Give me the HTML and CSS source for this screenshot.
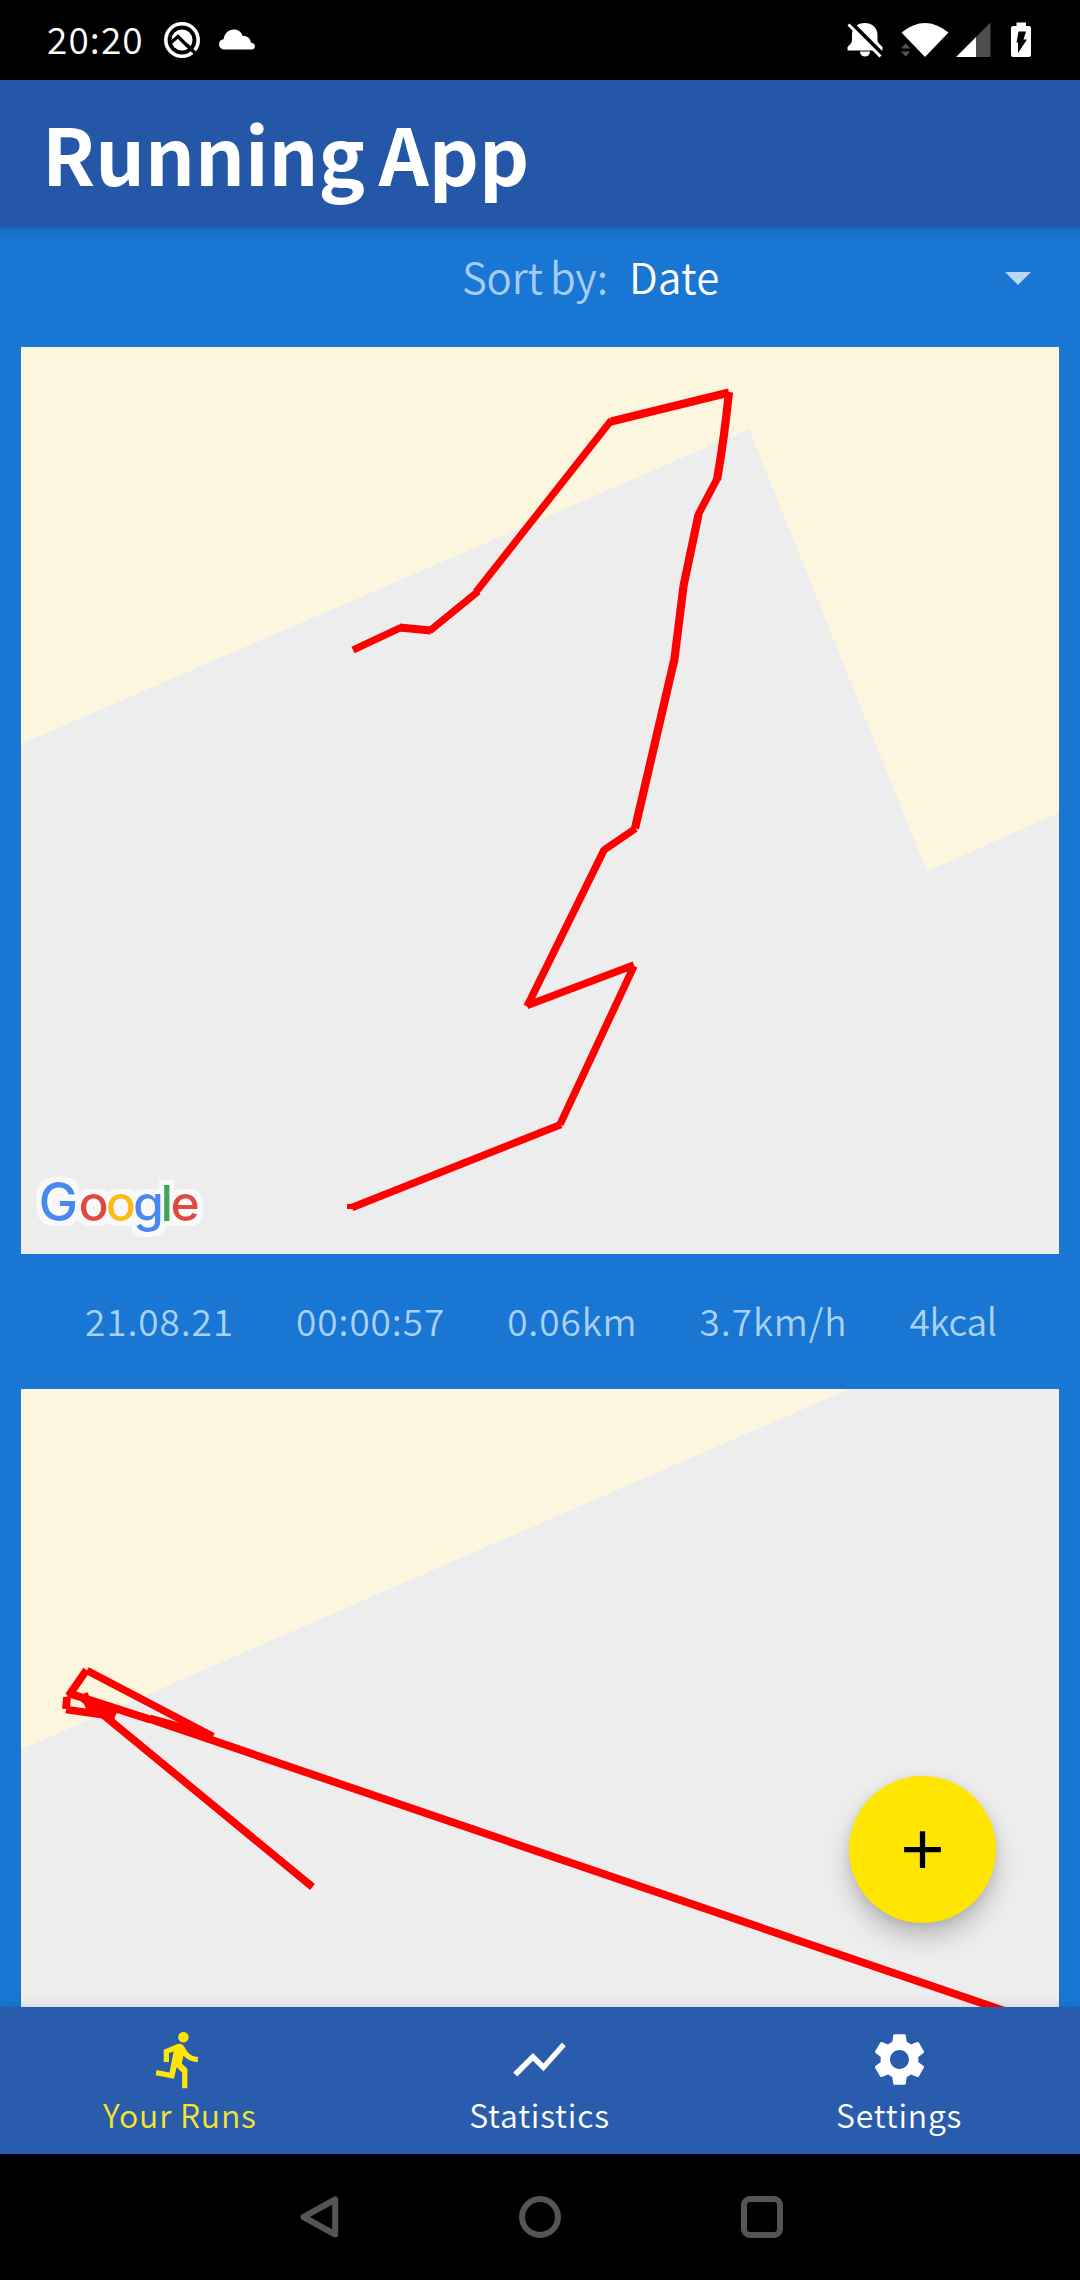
FILE: index.html
```html
<!DOCTYPE html>
<html lang="en">
<head>
<meta charset="utf-8">
<title>Running App</title>
<link rel="stylesheet" href="styles.css">
</head>
<body>
<div class="screen">
  <div class="status-bar">
    <span class="clock">20:20</span>
    <svg class="icon-q" width="38" height="38" viewBox="0 0 38 38">
      <circle cx="19" cy="19" r="16.2" fill="none" stroke="#fff" stroke-width="3.600"/>
      <circle cx="19" cy="19" r="10.5" fill="#fff"/>
      <path d="M8 21.500l7-6 10 10" fill="none" stroke="#000" stroke-width="3.400"/>
      <path d="M24 24l9 9" fill="none" stroke="#000" stroke-width="3.400"/>
    </svg>
    <svg class="icon-cloud" width="36" height="21" viewBox="0 0 36 21">
      <path d="M6 20.500C2.500 20.500 0 18.300 0 15.200C0 12.400 2 10.500 4.600 10.200C5.200 4.500 9.500.5 14.800.5C19.300.5 22.500 3.200 23.800 7C28.500 6.800 31.500 9.600 31.800 13.400C34.300 13.600 36 15.100 36 17.200C36 19.200 34.400 20.500 32.300 20.500Z" fill="#fff"/>
    </svg>
    <span class="spacer"></span>
    <svg width="36" height="36" viewBox="0 0 36 36" class="icon-bell">
      <path d="M12.500 33.500L13 29.500H23V30C22.500 33 20.500 34.500 18 34.500C15.500 34.500 13.500 33 13 30Z" fill="#fff"/>
      <path d="M0.500 28.500V25C3 22.500 5 21 5 18V13C5 5.500 10.500 1 18 1C25.500 1 30.500 6 30.500 13V18C30.500 21 32.500 22 35.500 25V28.500Z" fill="#fff"/>
      <path d="M3.500 0L36 32.500" stroke="#000" stroke-width="4"/>
      <path d="M1.500 2.500L33.500 34.500" stroke="#fff" stroke-width="3"/>
    </svg>
    <svg width="48" height="36" viewBox="0 0 48 36" class="icon-wifi">
      <path d="M0.500 10.500Q24-8.500 47.500 10.500L24 35Z" fill="#fff"/>
      <path d="M0 26.500L4.700 21.500L9.400 26.500ZM0 29.500H9.400L4.700 34.500Z" fill="#555"/>
    </svg>
    <svg width="36" height="36" viewBox="0 0 36 36" class="icon-signal">
      <path d="M20 15L34.500 0.500V33.500Q34.500 35 33 35H20Z" fill="#4d4d4d"/>
      <path d="M20 15V35H1Q0 35 0.500 34.500Z" fill="#fff"/>
    </svg>
    <svg width="20" height="36" viewBox="0 0 20 36" class="icon-battery">
      <path d="M5.500 0.500H15V4H18Q20 4 20 6V33Q20 35 18 35H2Q0 35 0 33V6Q0 4 2 4H5.500Z" fill="#fff"/>
      <path d="M7.500 9.500H15L12.500 17.500H16L7 31V20.500H5.500Z" fill="#000"/>
    </svg>
  </div>

  <header class="app-bar"><h1>Running App</h1></header>

  <main class="content">
    <div class="sort-row">
      <span class="sort-label">Sort by:</span>
      <span class="sort-value">Date</span>
      <svg width="26" height="13" viewBox="0 0 26 13"><path d="M0 0H26L13 13Z" fill="#bbd6f2"/></svg>
    </div>

    <article class="run">
      <svg class="map" width="1038" height="907" viewBox="21 347 1038 907">
        <filter id="halo" x="-10%" y="-20%" width="120%" height="140%">
          <feMorphology in="SourceAlpha" operator="dilate" radius="4.5" result="wide"/>
          <feGaussianBlur in="wide" stdDeviation="0.7" result="soft"/>
          <feFlood flood-color="#f9f9f9"/>
          <feComposite in2="soft" operator="in"/>
          <feMerge><feMergeNode/><feMergeNode in="SourceGraphic"/></feMerge>
        </filter>
        <rect x="21" y="347" width="1038" height="907" fill="#ededed"/>
        <path d="M21 347H1059V812.500L927 871.500L749 429L21 744Z" fill="#fdf6df"/>
        <g class="track">
          <path stroke-width="7.400" d="M353 650L401 627.500M429.500 631L478 591.500M604 850L635.500 828.500M604.500 849L527 1006.500M634 966L560 1124.500M527 1005.500L634 965M561 1124.500L352 1207.500M717 479L698 515"/>
          <path stroke-width="7.200" d="M476 592L611.500 420"/>
          <path stroke-width="8.200" d="M399.500 627.500L431 630.500M611 421.500L729 392.500M729 392Q724 440 717 480M698.500 514.500L683.500 586M683.500 586L674 662.500M674 661L635 828.500"/>
          <path stroke-width="5" d="M347 1206.500H353"/>
        </g>
        <text class="logo" y="1220.500" filter="url(#halo)"><tspan class="logo-cap" x="38.500" fill="#4688f1">G</tspan><tspan x="78.500" fill="#e04a3f">o</tspan><tspan x="105.800" fill="#fabc0e">o</tspan><tspan x="133" fill="#4688f1">g</tspan><tspan x="160.500" fill="#3fa457">l</tspan><tspan x="170.500" fill="#e04a3f">e</tspan></text>
      </svg>
      <div class="stats">
        <span>21.08.21</span><span>00:00:57</span><span>0.06km</span><span>3.7km/h</span><span>4kcal</span>
      </div>
    </article>

    <article class="run">
      <svg class="map" width="1038" height="618" viewBox="21 1389 1038 618">
        <rect x="21" y="1389" width="1038" height="618" fill="#ededed"/>
        <path d="M21 1389H849L21 1749.500Z" fill="#fdf6df"/>
        <g class="track">
          <path stroke-width="7.600" d="M87 1670.500L213 1736.500M86.500 1670L68.500 1696M84 1699L312.500 1887M84 1693.500L90 1709"/>
          <path stroke-width="7.800" d="M67 1697L66 1709M66 1709.500L115 1716.500M68 1693L150 1719.500M150 1718.500L212 1736M150 1719L1005 2011M82 1697.500L115 1716.500"/>
        </g>
      </svg>
    </article>

    <button class="fab" aria-label="Add run">
      <svg width="63" height="63" viewBox="0 0 24 24"><path d="M19 13h-6v6h-2v-6H5v-2h6V5h2v6h6z"/></svg>
    </button>
  </main>

  <nav class="tabs">
    <a class="tab active">
      <svg width="63" height="63" viewBox="0 0 24 24"><path d="M13.490 5.480c1.100 0 2-.9 2-2s-.9-2-2-2-2 .9-2 2 .9 2 2 2zm-3.600 13.900l1-4.400 2.100 2v6h2v-7.500l-2.100-2 .6-3c1.300 1.500 3.300 2.500 5.500 2.500v-2c-1.900 0-3.500-1-4.300-2.400l-1-1.600c-.4-.6-1-1-1.700-1-.3 0-.5.1-.8.1l-5.200 2.200v4.700h2v-3.400l1.800-.7-1.600 8.100-4.900-1-.4 2 7 1.400z"/></svg>
      <span>Your Runs</span>
    </a>
    <a class="tab">
      <svg width="63" height="63" viewBox="0 0 24 24"><path d="M3.500 18.490l6-6.010 4 4L22 6.920l-1.410-1.410-7.090 7.970-4-4L2 16.990z"/></svg>
      <span>Statistics</span>
    </a>
    <a class="tab">
      <svg width="63" height="63" viewBox="0 0 24 24"><path d="M19.140 12.940c.04-.3.060-.61.060-.94 0-.32-.02-.64-.07-.94l2.030-1.580c.18-.14.230-.41.120-.61l-1.920-3.320c-.12-.22-.37-.29-.59-.22l-2.390.96c-.5-.38-1.030-.7-1.620-.94l-.36-2.540c-.04-.24-.24-.41-.48-.41h-3.840c-.24 0-.43.170-.47.410l-.36 2.540c-.59.240-1.130.570-1.620.940l-2.390-.96c-.22-.08-.47 0-.59.220L2.740 8.870c-.12.210-.08.470.12.610l2.030 1.580c-.05.300-.09.630-.09.940s.02.640.07.940l-2.030 1.580c-.18.140-.23.410-.12.610l1.920 3.320c.12.220.370.290.590.220l2.390-.96c.5.380 1.030.700 1.620.940l.36 2.540c.05.240.240.410.480.410h3.840c.24 0 .440-.170.470-.410l.36-2.540c.59-.24 1.130-.56 1.620-.94l2.390.96c.22.080.470 0 .590-.22l1.920-3.320c.12-.22.070-.47-.12-.61l-2.010-1.580zM12 15.600c-1.980 0-3.600-1.620-3.600-3.600s1.620-3.600 3.600-3.600 3.600 1.620 3.600 3.600-1.620 3.600-3.600 3.600z"/></svg>
      <span>Settings</span>
    </a>
  </nav>

  <div class="system-nav">
    <svg width="42" height="44" viewBox="0 0 42 44"><path d="M36.200 4.500V39.500L4.500 22Z"/></svg>
    <svg width="44" height="44" viewBox="0 0 44 44"><circle cx="22" cy="22" r="18"/></svg>
    <svg width="44" height="44" viewBox="0 0 44 44"><rect x="4" y="4" width="36" height="36" rx="6"/></svg>
  </div>
</div>
</body>
</html>
```
FILE: styles.css
```css
* { box-sizing: border-box; }

body {
  margin: 0;
  background: #000;
  font-family: "Noto Sans CJK SC", "Noto Sans", sans-serif;
  font-weight: 350;
  color: #fff;
}

svg { display: block; flex: none; }

.screen {
  width: 1080px;
  height: 2280px;
  display: flex;
  flex-direction: column;
  overflow: hidden;
}

.status-bar {
  height: 80px;
  flex: none;
  display: flex;
  align-items: center;
  padding: 0 49px 0 46px;
  background: #000;
}

.clock {
  font-size: 37px;
  line-height: 44px;
  padding-bottom: 4px;
  padding-left: 1px;
  letter-spacing: 1.1px;
  width: 117px;
}

.icon-cloud { margin-left: 18px; margin-top: -2px; }
.spacer { flex: 1; }
.icon-wifi { margin-left: 18px; }
.icon-signal { margin-left: 7px; }
.icon-battery { margin-left: 19px; }

.app-bar {
  height: 147px;
  flex: none;
  display: flex;
  align-items: center;
  padding: 0 42px 4px;
  background: #2457a7;
  box-shadow: 0 3px 8px rgba(0, 0, 0, .18);
  position: relative;
  z-index: 1;
}

.app-bar h1 {
  margin: 0;
  font-size: 78px;
  line-height: 90px;
  font-weight: 700;
  word-spacing: -4px;
  white-space: nowrap;
}

.content {
  height: 1780px;
  flex: none;
  position: relative;
  padding: 0 21px;
  background: #1976d2;
  overflow: hidden;
}

.sort-row {
  height: 120px;
  display: flex;
  align-items: center;
  padding: 0 28px 18px 441px;
  font-size: 42px;
  line-height: 50px;
}

.sort-row span { padding-bottom: 5px; }
.sort-label { width: 167px; color: #a3cdf6; white-space: nowrap; letter-spacing: -.2px; word-spacing: -2px; }
.sort-value { flex: 1; letter-spacing: .3px; }

.track {
  fill: none;
  stroke: #f00;
}

.logo {
  font-family: Inter, sans-serif;
  font-size: 50px;
  font-weight: 500;
}

.logo-cap { font-size: 53px; }

.stats {
  height: 135px;
  display: flex;
  align-items: center;
  justify-content: space-evenly;
  padding: 0 0 3px 2px;
  font-size: 37px;
  line-height: 44px;
  letter-spacing: .9px;
  color: #a9d1f8;
}

.stats span:last-child { letter-spacing: -.3px; }

.fab {
  position: absolute;
  right: 84px;
  bottom: 84px;
  width: 147px;
  height: 147px;
  padding: 0;
  border: 0;
  border-radius: 50%;
  background: #ffe600;
  display: flex;
  align-items: center;
  justify-content: center;
  box-shadow: 0 14px 24px rgba(0, 0, 0, .22), 0 2px 10px rgba(0, 0, 0, .08);
}

.tabs {
  height: 147px;
  flex: none;
  display: grid;
  grid-template-columns: repeat(3, 1fr);
  padding-right: 1px;
  background: #2a5cae;
  box-shadow: 0 -1px 10px rgba(0, 0, 0, .12);
  position: relative;
  z-index: 1;
}

.tab {
  display: flex;
  flex-direction: column;
  align-items: center;
  padding-top: 21px;
  font-size: 32px;
  line-height: 38px;
  letter-spacing: .8px;
}

.tab svg { fill: #fff; }
.tab.active { color: #f4e62b; }
.tab.active svg { fill: #ffe600; }
.tab span { margin-top: 4px; }

.system-nav {
  height: 126px;
  flex: none;
  display: flex;
  align-items: center;
  padding-left: 299px;
  gap: 177px;
}

.system-nav svg {
  fill: none;
  stroke: #555;
  stroke-width: 6px;
  stroke-linejoin: round;
}

.system-nav svg:last-child { margin-left: 1px; }
```
